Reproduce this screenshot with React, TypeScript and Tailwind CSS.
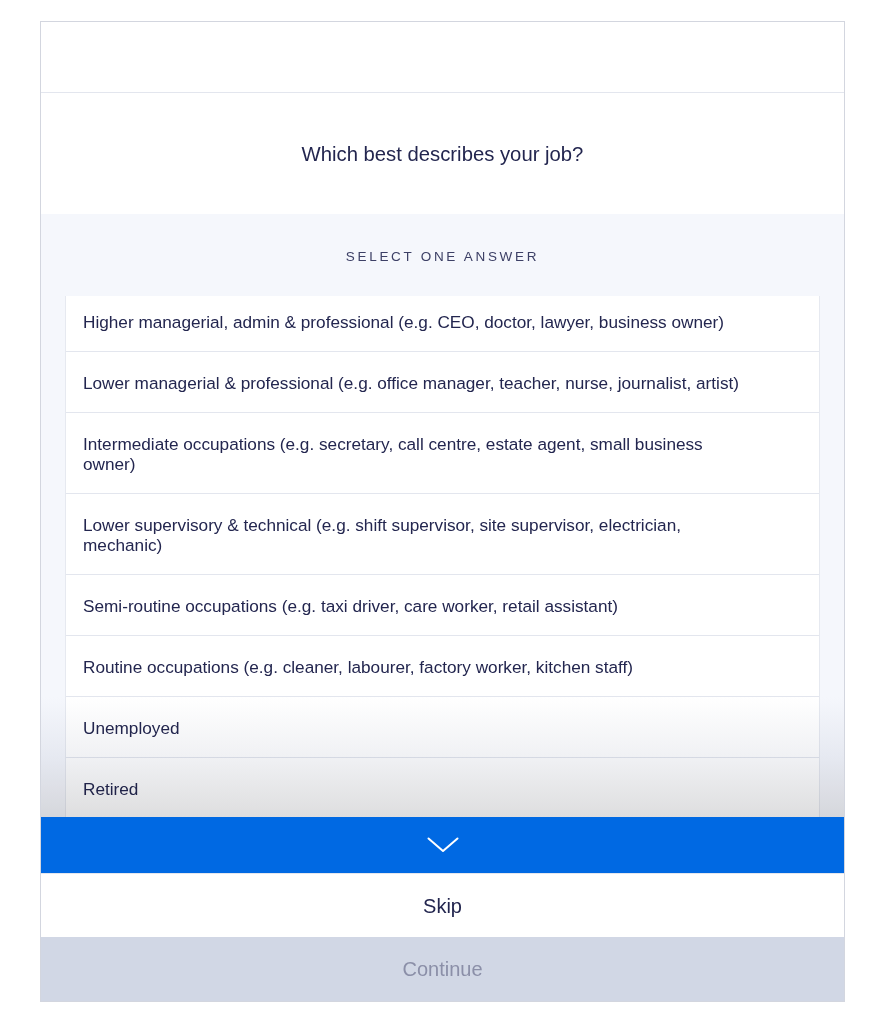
import React from 'react'

const answers = [
  'Higher managerial, admin & professional (e.g. CEO, doctor, lawyer, business owner)',
  'Lower managerial & professional (e.g. office manager, teacher, nurse, journalist, artist)',
  'Intermediate occupations (e.g. secretary, call centre, estate agent, small business owner)',
  'Lower supervisory & technical (e.g. shift supervisor, site supervisor, electrician, mechanic)',
  'Semi-routine occupations (e.g. taxi driver, care worker, retail assistant)',
  'Routine occupations (e.g. cleaner, labourer, factory worker, kitchen staff)',
  'Unemployed',
  'Retired',
]

export default function App() {
  return (
    <div
      className="min-h-screen bg-white pl-[40px] pt-[21px] text-[#23264f]"
      style={{ fontFamily: '"Liberation Sans", Arial, sans-serif' }}
    >
      <div className="flex h-[981px] w-[805px] flex-col overflow-hidden border border-[#d3d6df]">
        <div className="h-[71px] shrink-0 border-b border-[#e3e6ee]" />

        <div className="flex h-[121px] shrink-0 items-center justify-center">
          <h1 className="text-[20.3px] leading-[24px]">Which best describes your job?</h1>
        </div>

        <div className="relative flex min-h-0 flex-1 flex-col bg-[#f5f7fc]">
          <div className="flex h-[82px] shrink-0 items-center justify-center pt-[5px]">
            <p className="text-[13.5px] tracking-[0.2em] text-[#3d4066]">SELECT ONE ANSWER</p>
          </div>

          <ul className="mx-[24px] min-h-0 flex-1 overflow-hidden border-x border-[#e6e9f0] bg-white">
            {answers.map((a, i) => (
              <li
                key={a}
                className={`border-b border-[#e3e6ee] pb-[19px] pl-[17px] pr-[71px] text-[17.2px] leading-[20px] ${
                  i === 0 ? 'pt-[16px]' : 'pt-[21px]'
                }`}
              >
                {a}
              </li>
            ))}
          </ul>

          {/* fade over the bottom of the list */}
          <div className="pointer-events-none absolute inset-x-0 bottom-0 h-[120px] bg-gradient-to-b from-white via-[#f0f1f4] to-[#dededf] mix-blend-multiply" />
        </div>

        <button className="flex h-[56px] shrink-0 items-center justify-center bg-[#0069e3]">
          <svg width="32" height="16" viewBox="0 0 32 16" fill="none">
            <polyline points="1.5,1.5 16,14 30.5,1.5" stroke="white" strokeWidth="2" strokeLinecap="round" strokeLinejoin="round" />
          </svg>
        </button>

        <button className="flex h-[64px] shrink-0 items-center justify-center border-t border-[#e3e6ee] bg-white text-[20px]">
          Skip
        </button>

        <button className="flex h-[64px] shrink-0 items-center justify-center bg-[#d1d7e5] text-[20px] text-[#8b8fa8]">
          Continue
        </button>
      </div>
    </div>
  )
}
